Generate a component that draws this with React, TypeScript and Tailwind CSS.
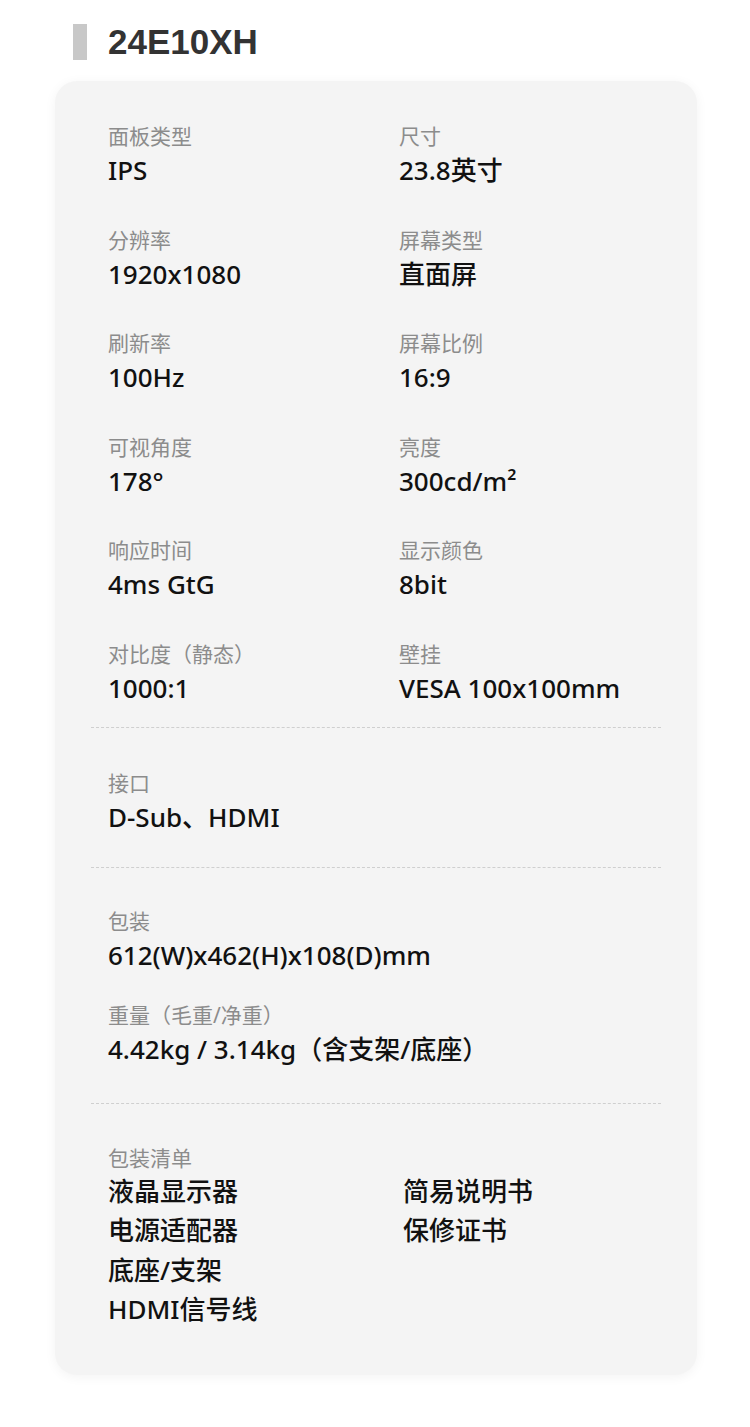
import React from 'react';

const specs: [string, string][] = [
  ['面板类型', 'IPS'],
  ['尺寸', '23.8英寸'],
  ['分辨率', '1920x1080'],
  ['屏幕类型', '直面屏'],
  ['刷新率', '100Hz'],
  ['屏幕比例', '16:9'],
  ['可视角度', '178°'],
  ['亮度', '300cd/m²'],
  ['响应时间', '4ms GtG'],
  ['显示颜色', '8bit'],
  ['对比度（静态）', '1000:1'],
  ['壁挂', 'VESA 100x100mm'],
];

const Label = ({ children }: { children: React.ReactNode }) => (
  <div className="h-[28px] text-[21px] leading-[28px] text-[#8c8c8c] whitespace-nowrap">{children}</div>
);

const Value = ({ children }: { children: React.ReactNode }) => (
  <div className="h-[34px] text-[26px] leading-[34px] font-medium text-[#111] whitespace-nowrap">{children}</div>
);

const Spec = ({ label, value }: { label: string; value: string }) => (
  <div className="flex h-[65px] flex-col gap-[3px]">
    <Label>{label}</Label>
    <Value>{value}</Value>
  </div>
);

const Divider = () => <div className="mx-[36px] border-t border-dashed border-[#cfcfcf]" />;

export default function App() {
  return (
    <div className="min-h-[1427px] w-[750px] bg-white font-['Noto_Sans','Noto_Sans_CJK_SC',sans-serif]">
      <div className="flex h-[81px] items-start pl-[73px] pt-[24px]">
        <div className="h-[36px] w-[14px] bg-[#c8c8c8]" />
        <h1 className="ml-[21px] -mt-[2px] text-[35px] leading-[40px] font-bold text-[#333] font-['Liberation_Sans',sans-serif]">
          24E10XH
        </h1>
      </div>

      <div className="ml-[55px] w-[642px] rounded-[22px] bg-[#f4f4f4] shadow-[0_2px_12px_rgba(0,0,0,0.05)] pb-[45px]">
        <div className="grid grid-cols-[291px_1fr] gap-y-[38.5px] pl-[53px] pt-[41px] pb-[22px]">
          {specs.map(([l, v]) => (
            <Spec key={l} label={l} value={v} />
          ))}
        </div>

        <Divider />
        <div className="pl-[53px] pt-[41px] pb-[33px]">
          <Spec label="接口" value="D-Sub、HDMI" />
        </div>

        <Divider />
        <div className="flex flex-col gap-[29px] pl-[53px] pt-[39px] pb-[37px]">
          <Spec label="包装" value="612(W)x462(H)x108(D)mm" />
          <Spec label="重量（毛重/净重）" value="4.42kg / 3.14kg（含支架/底座）" />
        </div>

        <Divider />
        <div className="pl-[53px] pt-[40px]">
          <Label>包装清单</Label>
          <div className="grid grid-cols-[295px_1fr] text-[26px] font-medium text-[#111]">
            <div>
              <div className="h-[39.67px] leading-[39.67px]">液晶显示器</div>
              <div className="h-[39.67px] leading-[39.67px]">电源适配器</div>
              <div className="h-[39.67px] leading-[39.67px]">底座/支架</div>
              <div className="h-[39.67px] leading-[39.67px]">HDMI信号线</div>
            </div>
            <div>
              <div className="h-[39.67px] leading-[39.67px]">简易说明书</div>
              <div className="h-[39.67px] leading-[39.67px]">保修证书</div>
            </div>
          </div>
        </div>
      </div>
    </div>
  );
}
